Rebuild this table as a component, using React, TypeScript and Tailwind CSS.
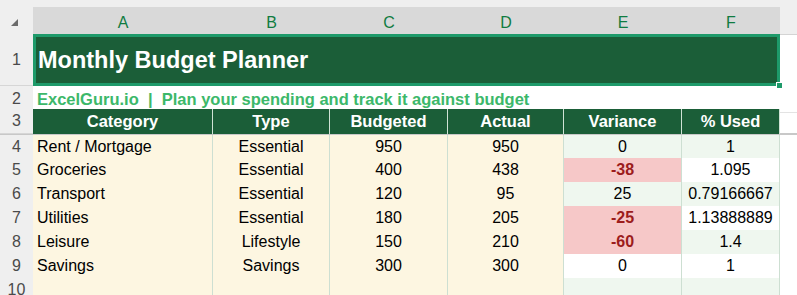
const rows = [
  { n: 4, cat: "Rent / Mortgage", type: "Essential", bud: "950", act: "950", v: "0", vt: "g", p: "1", pt: "g" },
  { n: 5, cat: "Groceries", type: "Essential", bud: "400", act: "438", v: "-38", vt: "r", p: "1.095", pt: "w" },
  { n: 6, cat: "Transport", type: "Essential", bud: "120", act: "95", v: "25", vt: "g", p: "0.79166667", pt: "g" },
  { n: 7, cat: "Utilities", type: "Essential", bud: "180", act: "205", v: "-25", vt: "r", p: "1.13888889", pt: "w" },
  { n: 8, cat: "Leisure", type: "Lifestyle", bud: "150", act: "210", v: "-60", vt: "r", p: "1.4", pt: "g" },
  { n: 9, cat: "Savings", type: "Savings", bud: "300", act: "300", v: "0", vt: "w", p: "1", pt: "w" },
];

const cols = "grid grid-cols-[33px_180px_117px_118px_116px_118px_98px_1fr]";

function bgFor(t: string) {
  if (t === "r") return "bg-[#f6c8c8] text-[#9c1c1c] font-bold";
  if (t === "w") return "bg-white";
  return "bg-[#eff7ef]";
}

function RowHead({ n }: { n: number | string }) {
  return (
    <div className="flex items-center justify-center bg-[#efefef] text-[#4a4a4a] border-b border-[#d6d6d6]">
      {n}
    </div>
  );
}

export default function App() {
  const cell = "flex items-center border-r border-b border-[#cddfd2] overflow-hidden whitespace-nowrap";
  return (
    <div className="w-[797px] h-[295px] overflow-hidden bg-white text-[16px] text-black font-['Liberation_Sans',Arial,sans-serif]">
      <div className="h-[7px] bg-[#efefef]" />
      {/* column letters */}
      <div className={`${cols} h-[27px]`}>
        <div className="relative bg-[#efefef]">
          <div className="absolute left-[11px] top-[12px] w-0 h-0 border-l-[7px] border-l-transparent border-b-[7px] border-b-[#6b6b6b]" />
        </div>
        {["A", "B", "C", "D", "E", "F"].map((c) => (
          <div key={c} className="flex items-center justify-center bg-[#d9d9d9] text-[#107c41] pt-[4px]">
            {c}
          </div>
        ))}
        <div className="bg-[#efefef] border-b border-[#d4d4d4]" />
      </div>
      {/* title */}
      <div className={`${cols} h-[52px]`}>
        <RowHead n={1} />
        <div className="relative col-span-6 flex items-center bg-[#1b5e38] border-[3px] border-[#1e9a6a] pl-[2px] pt-[2px] text-white font-bold text-[23.5px]">
          Monthly Budget Planner
          <div className="absolute right-[-6px] bottom-[-6px] w-[7px] h-[7px] bg-[#1e9a6a] border border-white" />
        </div>
        <div />
      </div>
      {/* subtitle */}
      <div className={`${cols} h-[23px]`}>
        <RowHead n={2} />
        <div className="col-span-6 flex items-center pl-[4px] pt-[1px] border-b border-[#cddfd2] text-[#3cb86a] font-bold text-[16.5px] whitespace-pre">
          ExcelGuru.io  |  Plan your spending and track it against budget
        </div>
        <div className="border-b border-[#e3e3e3]" />
      </div>
      {/* header */}
      <div className={`${cols} h-[24px]`}>
        <RowHead n={3} />
        {["Category", "Type", "Budgeted", "Actual", "Variance", "% Used"].map((h) => (
          <div key={h} className="flex items-center justify-center bg-[#1b5e38] text-white font-bold text-[16.5px] border-r border-[#cfe3d5]">
            {h}
          </div>
        ))}
        <div />
      </div>
      <div className="h-[2px] bg-[#c8c8c8]" />
      {rows.map((r, i) => (
        <div key={r.n} className={`${cols} ${i === 0 ? "h-[23px]" : "h-[24px]"}`}>
          <RowHead n={r.n} />
          <div className={`${cell} bg-[#fdf6e1] pl-[4px]`}>{r.cat}</div>
          <div className={`${cell} bg-[#fdf6e1] justify-center`}>{r.type}</div>
          <div className={`${cell} bg-[#fdf6e1] justify-center`}>{r.bud}</div>
          <div className={`${cell} bg-[#fdf6e1] justify-center`}>{r.act}</div>
          <div className={`${cell} justify-center ${bgFor(r.vt)}`}>{r.v}</div>
          <div className={`${cell} justify-center ${bgFor(r.pt)}`}>{r.p}</div>
          <div />
        </div>
      ))}
      <div className={`${cols} h-[24px]`}>
        <RowHead n={10} />
        <div className={`${cell} bg-[#fdf6e1]`} />
        <div className={`${cell} bg-[#fdf6e1]`} />
        <div className={`${cell} bg-[#fdf6e1]`} />
        <div className={`${cell} bg-[#fdf6e1]`} />
        <div className={`${cell} bg-[#eff7ef]`} />
        <div className={`${cell} bg-[#eff7ef]`} />
        <div />
      </div>
    </div>
  );
}
